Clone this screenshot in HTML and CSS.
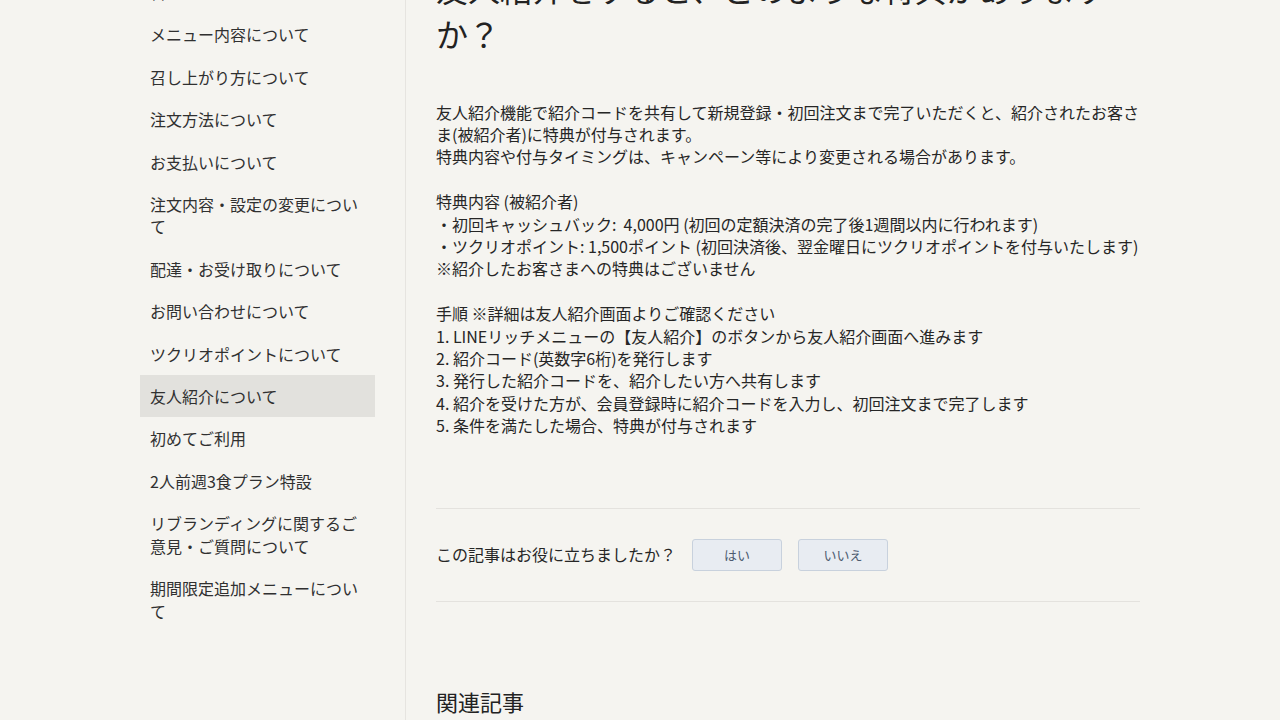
FILE: index.html
```html
<!DOCTYPE html>
<html lang="ja">
<head>
<meta charset="utf-8">
<title>友人紹介について</title>
<link rel="stylesheet" href="styles.css">
</head>
<body>
<div class="page">
  <aside class="sidebar">
    <ul class="nav">
      <li class="nav-item">料金について</li>
      <li class="nav-item">メニュー内容について</li>
      <li class="nav-item">召し上がり方について</li>
      <li class="nav-item">注文方法について</li>
      <li class="nav-item">お支払いについて</li>
      <li class="nav-item">注文内容・設定の変更について</li>
      <li class="nav-item">配達・お受け取りについて</li>
      <li class="nav-item">お問い合わせについて</li>
      <li class="nav-item">ツクリオポイントについて</li>
      <li class="nav-item active">友人紹介について</li>
      <li class="nav-item">初めてご利用</li>
      <li class="nav-item">2人前週3食プラン特設</li>
      <li class="nav-item">リブランディングに関するご意見・ご質問について</li>
      <li class="nav-item">期間限定追加メニューについて</li>
    </ul>
  </aside>
  <main class="content">
    <h1 class="title">友人紹介をすると、どのような特典がありますか？</h1>
    <div class="body">
      <p>友人紹介機能で紹介コードを共有して新規登録・初回注文まで完了いただくと、紹介されたお客さま(被紹介者)に特典が付与されます。<br>特典内容や付与タイミングは、キャンペーン等により変更される場合があります。<br><br>特典内容 (被紹介者)<br>・初回キャッシュバック:&nbsp; 4,000円 (初回の定額決済の完了後1週間以内に行われます)<br>・ツクリオポイント: 1,500ポイント (初回決済後、翌金曜日にツクリオポイントを付与いたします)<br>※紹介したお客さまへの特典はございません<br><br>手順 ※詳細は友人紹介画面よりご確認ください<br>1. LINEリッチメニューの【友人紹介】のボタンから友人紹介画面へ進みます<br>2. 紹介コード(英数字6桁)を発行します<br>3. 発行した紹介コードを、紹介したい方へ共有します<br>4. 紹介を受けた方が、会員登録時に紹介コードを入力し、初回注文まで完了します<br>5. 条件を満たした場合、特典が付与されます</p>
    </div>
    <div class="feedback">
      <span class="feedback-q">この記事はお役に立ちましたか？</span>
      <button class="vote">はい</button>
      <button class="vote">いいえ</button>
    </div>
    <h2 class="related">関連記事</h2>
  </main>
</div>
</body>
</html>
```

FILE: styles.css
```css
* { box-sizing: border-box; }
html, body {
  margin: 0;
  padding: 0;
  background: #f5f4f0;
  overflow: hidden;
}
body {
  font-family: "Noto Sans CJK JP", "Noto Sans", sans-serif;
  color: #262626;
  font-size: 16px;
  line-height: 1.4;
}
.page {
  display: flex;
  margin-top: -60px;
  min-height: 900px;
}
.sidebar {
  width: 406px;
  flex: none;
  padding: 31px 30px 0 140px;
  border-right: 1px solid #e6e4e0;
}
.nav {
  list-style: none;
  margin: 0;
  padding: 0;
}
.nav-item {
  padding: 10px 10px;
  font-size: 16px;
  line-height: 22.4px;
  color: #303030;
}
.nav-item.active {
  background: #e2e1dd;
}
.content {
  width: 734px;
  flex: none;
  padding: 26px 0 0 30px;
}
.title {
  margin: 0 0 45px;
  font-size: 32px;
  font-weight: 400;
  line-height: 44.8px;
  color: #222;
}
.body p {
  margin: 0;
  font-size: 16px;
  line-height: 22.4px;
}
.feedback {
  margin-top: 71px;
  border-top: 1px solid #e4e2de;
  border-bottom: 1px solid #e4e2de;
  padding: 30px 0;
  display: flex;
  align-items: center;
  gap: 16px;
}
.feedback-q {
  font-size: 16px;
}
.vote {
  width: 90px;
  height: 32px;
  background: #e8ecf2;
  border: 1px solid #c8d1dd;
  border-radius: 3px;
  color: #4d5b70;
  font-family: "Noto Sans CJK JP", sans-serif;
  font-size: 13px;
  padding: 0;
}
.related {
  margin: 84px 0 0;
  font-size: 22px;
  font-weight: 400;
  line-height: 30px;
  color: #222;
}
```
